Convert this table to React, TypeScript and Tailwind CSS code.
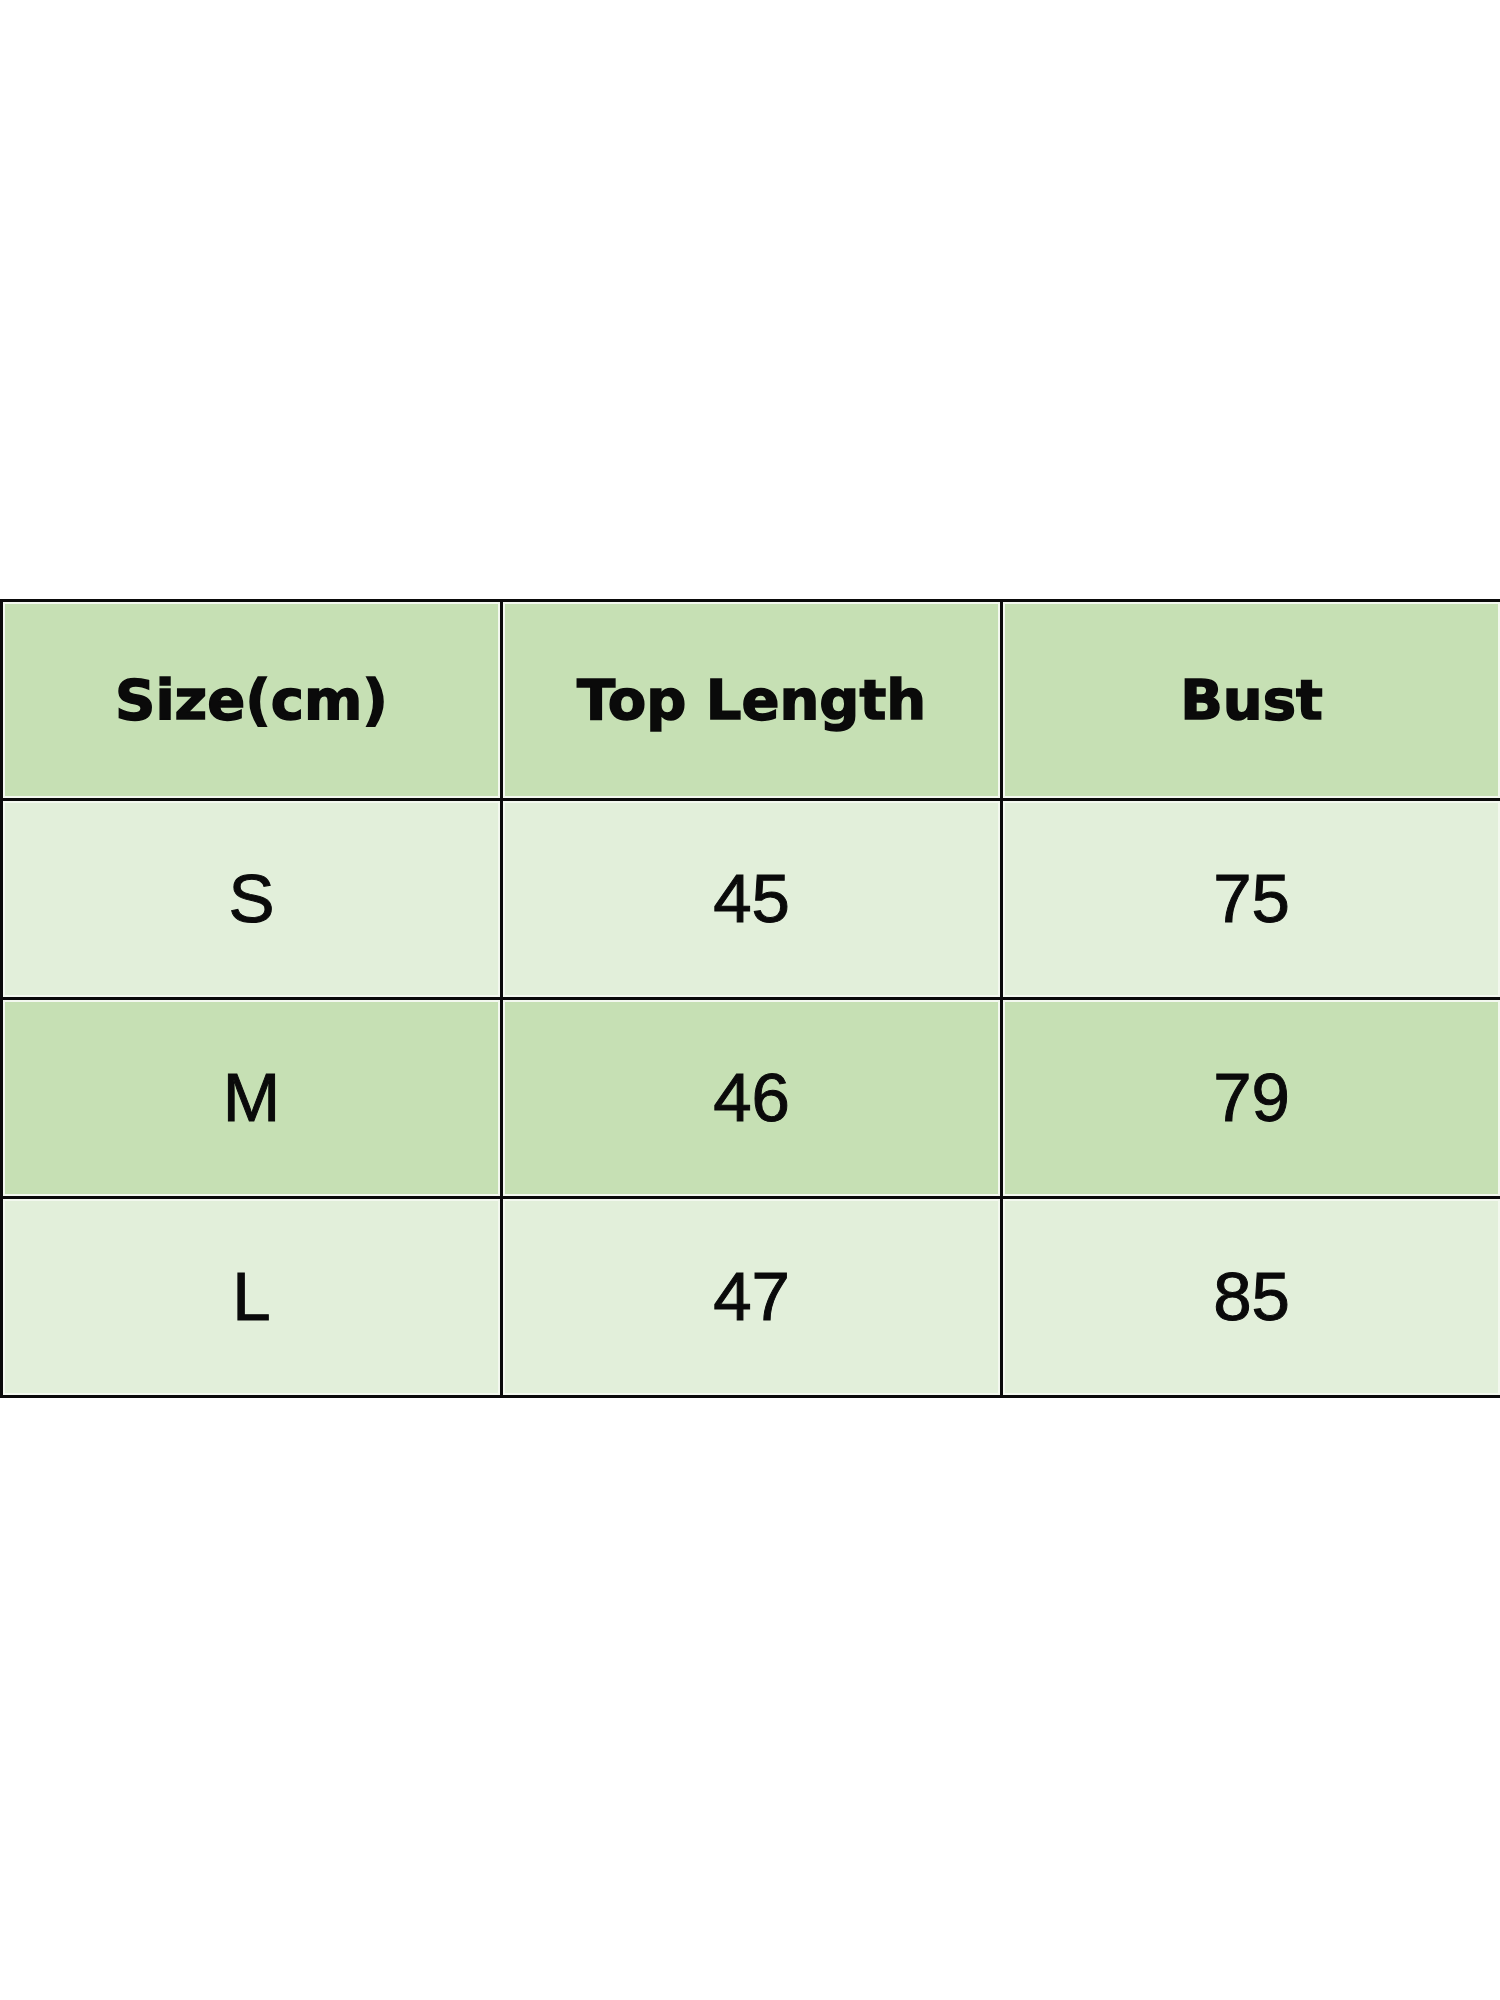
const HEAD = ['Size(cm)', 'Top Length', 'Bust'];

const ROWS = [
  { size: 'S', top: '45', bust: '75', dark: false },
  { size: 'M', top: '46', bust: '79', dark: true },
  { size: 'L', top: '47', bust: '85', dark: false },
];

function Cell({ children, dark, head }: { children: React.ReactNode; dark?: boolean; head?: boolean }) {
  return (
    <td
      className={`h-[199px] w-[500px] border-[3px] border-[#0a0a0a] p-0 text-center align-middle shadow-[inset_0_0_0_2px_#f3f8ef] ${
        dark ? 'bg-[#c6e0b4]' : 'bg-[#e2efda]'
      } ${
        head
          ? "font-['DejaVu_Sans',sans-serif] text-[56px] font-bold text-[#0a0a0a] [-webkit-text-stroke:1.5px_#0a0a0a]"
          : "font-['Liberation_Sans',Arial,sans-serif] text-[69px] text-[#0a0a0a] [-webkit-text-stroke:1px_#0a0a0a]"
      }`}
    >
      {children}
    </td>
  );
}

export default function App() {
  return (
    <div className="h-[2000px] w-[1500px] bg-white pt-[599px]">
      <table className="w-[1500px] table-fixed border-collapse">
        <tbody>
          <tr>
            {HEAD.map((h) => (
              <Cell key={h} dark head>
                {h}
              </Cell>
            ))}
          </tr>
          {ROWS.map((r) => (
            <tr key={r.size}>
              <Cell dark={r.dark}>{r.size}</Cell>
              <Cell dark={r.dark}>{r.top}</Cell>
              <Cell dark={r.dark}>{r.bust}</Cell>
            </tr>
          ))}
        </tbody>
      </table>
    </div>
  );
}
